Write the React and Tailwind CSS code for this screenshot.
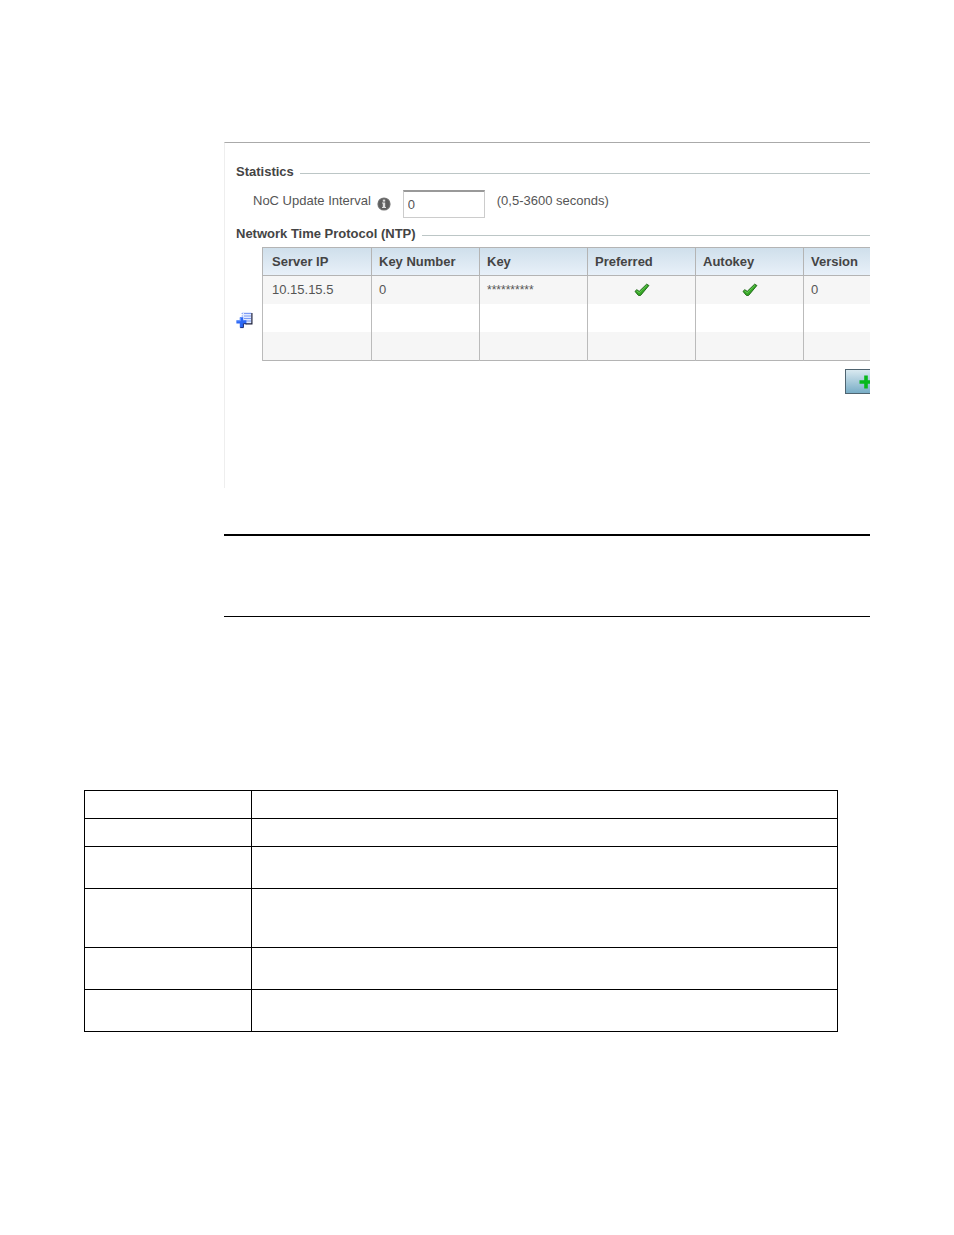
import React, { useState } from 'react';

const columns = ['Server IP', 'Key Number', 'Key', 'Preferred', 'Autokey', 'Version'];

const servers = [
    { ip: '10.15.15.5', keyNumber: '0', key: '**********', preferred: true, autokey: true, version: '0' },
    null,
    null,
];

const rowHeights = ['h-7', 'h-7', 'h-[42px]', 'h-[59px]', 'h-[42px]', 'h-[42px]'];

const CheckIcon = () => (
    <svg className="mx-auto block h-4 w-4" viewBox="0 0 16 16" role="img" aria-label="Yes">
        <path d="M1 9.4 L2.8 7.7 L5.2 9.4 L12.6 2.2 L14.9 3.5 L6.6 13.4 L4.4 13.4 Z" fill="#37a827" stroke="#226b1b" strokeWidth="1" strokeLinejoin="round" />
        <path d="M2.7 8.9 L5.2 10.8 L13 3.3" fill="none" stroke="#62c951" strokeWidth="1" />
    </svg>
);

const InfoIcon = () => (
    <svg className="h-[14px] w-[14px]" viewBox="0 0 14 14" aria-hidden="true">
        <circle cx="7" cy="7" r="6.6" fill="#777" />
        <circle cx="7" cy="7" r="5.6" fill="#5e5e5e" />
        <rect x="5.8" y="2.6" width="2.4" height="2" fill="#ddd" />
        <path d="M5 5.6 H8.2 V10 H9 V11 H5 V10 H5.8 V6.6 H5 Z" fill="#ddd" />
    </svg>
);

const AddRowIcon = () => (
    <svg className="h-[17px] w-[17px]" viewBox="0 0 17 17" aria-hidden="true">
        <rect x="6" y="0" width="9.5" height="11.5" fill="#e3ebff" />
        <path d="M8 1.5 H15 M8 4 H15 M8 6.5 H15 M8 9 H15" stroke="#7d9bf5" strokeWidth="1.2" />
        <path d="M5.6 1.5 H6.8 M5.6 4 H6.8" stroke="#7d9bf5" strokeWidth="1.2" />
        <path d="M15.9 1 V11.9 H9.5" fill="none" stroke="#1b1f3c" strokeWidth="1.2" />
        <path d="M3.8 5.3 H7.2 V8.2 H10.4 V11.4 H7.2 V15.4 H3.8 V11.4 H0.4 V8.2 H3.8 Z" fill="#2c68f6" />
        <path d="M10.4 11.7 H7.4 V15.6 H4.2" fill="none" stroke="#102678" strokeWidth="1" />
        <path d="M4.4 6 V8.8 H1" fill="none" stroke="#6f9cff" strokeWidth="1" />
    </svg>
);

const SectionHeading = ({ children }) => (
    <h2 className="flex h-4 items-center gap-[6px] text-[13px] leading-4 font-bold whitespace-nowrap text-[#444]">
        {children}
        <span className="mt-[2px] h-px flex-1 bg-[#bcc6c6]" />
    </h2>
);

const ServerRow = ({ server }) => (
    <tr className="h-7 odd:bg-[#f6f6f6] last:h-[29px]">
        <td className="border border-y-0 border-[#bbb] py-0 pr-[7px] pl-[9px]">{server?.ip}</td>
        <td className="border border-y-0 border-[#bbb] px-[7px] py-0">{server?.keyNumber}</td>
        <td className="border border-y-0 border-[#bbb] px-[7px] py-0 text-xs">{server?.key}</td>
        <td className="border border-y-0 border-[#bbb] p-0">{server?.preferred && <CheckIcon />}</td>
        <td className="border border-y-0 border-[#bbb] p-0">{server?.autokey && <CheckIcon />}</td>
        <td className="border border-y-0 border-[#bbb] px-[7px] py-0">{server?.version}</td>
    </tr>
);

const NtpPanel = () => {
    const [interval, setInterval] = useState('0');

    return (
        <section className="overflow-hidden border-t border-l border-t-[#aaa] border-l-[#eee] pt-[21px] pb-[94px] pl-[11px] text-[13px] leading-4 text-[#555]">
            <SectionHeading>Statistics</SectionHeading>
            <div className="mt-[10px] mb-2 flex h-7 items-start pl-[17px]">
                <label htmlFor="interval" className="pt-[3px]">NoC Update Interval</label>
                <span className="mt-[7px] ml-[6px]">
                    <InfoIcon />
                </span>
                <input
                    id="interval"
                    className="ml-3 h-7 w-[82px] border border-t-2 border-[#ccc] border-t-[#999] bg-white px-1 outline-none"
                    value={interval}
                    onChange={(e) => setInterval(e.target.value)}
                />
                <span className="ml-3 pt-[3px]">(0,5-3600 seconds)</span>
            </div>
            <SectionHeading>Network Time Protocol (NTP)</SectionHeading>
            <div className="mt-[5px] flex items-start gap-[9px]">
                <button type="button" aria-label="Insert row" className="mt-[65px] shrink-0">
                    <AddRowIcon />
                </button>
                <div className="w-[665px] shrink-0">
                    <table className="w-full table-fixed border-collapse border border-[#b4b4b4] text-left">
                        <colgroup>
                            <col className="w-[109px]" />
                            <col className="w-[108px]" />
                            <col className="w-[108px]" />
                            <col className="w-[108px]" />
                            <col className="w-[108px]" />
                            <col />
                        </colgroup>
                        <thead>
                            <tr className="h-7 bg-linear-to-b from-[#cfdfeb] to-[#e9f1f9] text-[#444]">
                                {columns.map((name) => (
                                    <th key={name} className="border border-[#b4b4b4] px-[7px] py-0 font-bold first:pl-[9px]">{name}</th>
                                ))}
                            </tr>
                        </thead>
                        <tbody>
                            {servers.map((server, i) => (
                                <ServerRow key={i} server={server} />
                            ))}
                        </tbody>
                    </table>
                    <div className="mt-2 flex justify-end">
                        <button
                            type="button"
                            aria-label="Add row"
                            className="h-[25px] w-[82px] border border-[#4f6470] bg-linear-to-b from-[#d9e9f0] to-[#78adc6] pl-[13px]"
                        >
                            <svg className="h-[14px] w-[14px]" viewBox="0 0 14 14" aria-hidden="true">
                                <path d="M5.2 0.5 H8.8 V5.2 H13.5 V8.8 H8.8 V13.5 H5.2 V8.8 H0.5 V5.2 H5.2 Z" fill="#08b81c" />
                            </svg>
                        </button>
                    </div>
                </div>
            </div>
        </section>
    );
};

export default function App() {
    return (
        <main className="min-h-screen bg-white px-[84px] pt-[142px] pb-48 font-['Liberation_Sans',Arial,sans-serif]">
            <div className="ml-[140px]">
                <NtpPanel />
                <hr className="mt-[46px] border-0 border-t-2 border-black" />
                <hr className="mt-20 border-0 border-t border-black" />
            </div>
            <div className="mt-[173px] mr-8">
                <table className="w-full table-fixed border-collapse border border-black">
                    <colgroup>
                        <col className="w-[167px]" />
                        <col />
                    </colgroup>
                    <tbody>
                        {rowHeights.map((height, i) => (
                            <tr key={i} className={height}>
                                <td className="border border-black p-0" />
                                <td className="border border-black p-0" />
                            </tr>
                        ))}
                    </tbody>
                </table>
            </div>
        </main>
    );
}
